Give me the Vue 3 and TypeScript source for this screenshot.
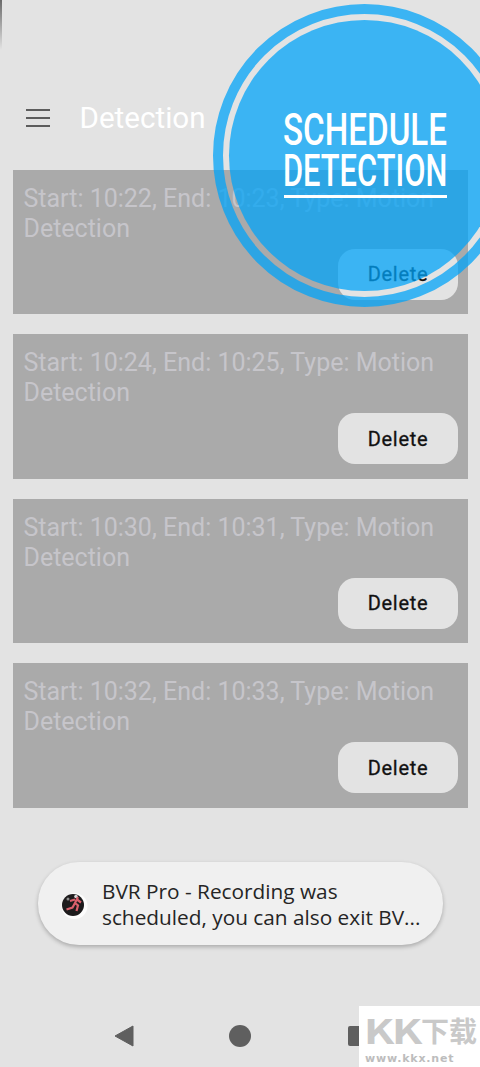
<script setup lang="ts">
interface Slot {
  start: string
  end: string
}

const slots: Slot[] = [
  { start: '10:22', end: '10:23' },
  { start: '10:24', end: '10:25' },
  { start: '10:30', end: '10:31' },
  { start: '10:32', end: '10:33' },
]
</script>

<template>
  <div class="screen">
    <header class="topbar">
      <div class="burger"><span></span><span></span><span></span></div>
      <h1 class="title">Detection</h1>
    </header>

    <div class="list">
      <div v-for="slot in slots" :key="slot.start" class="card">
        <p class="card-text">Start: {{ slot.start }}, End: {{ slot.end }}, Type: Motion Detection</p>
        <button class="btn-delete">Delete</button>
      </div>
    </div>

    <div class="toast">
      <svg class="toast-icon" width="30" height="30" viewBox="0 0 30 30">
        <circle cx="14.5" cy="17" r="13" fill="#fdfdfd" />
        <circle cx="13" cy="16" r="11" fill="#1d1b1c" />
        <circle cx="8" cy="10" r="1.5" fill="#8c8c8c" />
        <circle cx="16" cy="7.5" r="1.8" fill="#d9d9d9" />
        <path d="M18 8l-3 6 3 2.5-1.5 5.5M15 14l-2.5 4.5-6 2M15 10.5l-5 1.5M17 10.5l4 3" fill="none" stroke="#d9606c" stroke-width="2.2" />
      </svg>
      <p class="toast-text">BVR Pro - Recording was<br />scheduled, you can also exit BV...</p>
    </div>

    <nav class="navbar">
      <svg width="20" height="22" viewBox="0 0 20 22"><path d="M19 1v20L1 11z" fill="#5f5f5f" stroke="#5f5f5f" stroke-linejoin="round" /></svg>
      <span class="nav-home"></span>
      <span class="nav-recent"></span>
    </nav>

    <!-- * Tutorial callout over the list -->
    <div class="callout">
      <div class="callout-ring"></div>
      <div class="callout-fill"></div>
      <div class="callout-label">
        <span class="line-schedule">SCHEDULE</span>
        <span class="line-detection">DETECTION</span>
      </div>
    </div>

    <div class="edge"></div>

    <div class="watermark">
      <div class="wm-logo">
        <span class="wm-k">K</span>
        <span class="wm-k">K</span>
        <span>下</span>
        <span>载</span>
      </div>
      <div class="wm-url">www.kkx.net</div>
    </div>
  </div>
</template>

<style>
html,
body {
  margin: 0;
  background: #e3e3e3;
}
</style>

<style scoped>
.screen {
  position: relative;
  width: 480px;
  height: 1067px;
  overflow: hidden;
  background: #e3e3e3;
  font-family: Roboto, sans-serif;
}

.topbar {
  display: flex;
  align-items: center;
  height: 169.5px;
  padding: 67px 0 0 26px;
  box-sizing: border-box;
}

.burger {
  display: flex;
  flex-direction: column;
  gap: 6px;
  width: 24px;
  margin-right: 29.5px;
}

.burger span {
  height: 2px;
  background: #5d5d5d;
}

.title {
  margin: 0;
  font-size: 29.6px;
  font-weight: 400;
  color: #fff;
}

.list {
  display: flex;
  flex-direction: column;
  gap: 20px;
  padding-left: 13px;
}

.card {
  display: flex;
  flex-direction: column;
  width: 455px;
  height: 144.5px;
  padding: 14px 10px 0 10.5px;
  box-sizing: border-box;
  background: #aaaaaa;
}

.card-text {
  margin: 0;
  font-size: 25px;
  line-height: 30px;
  color: #c6c5ca;
}

.btn-delete {
  align-self: flex-end;
  width: 120px;
  height: 51px;
  margin-top: 5px;
  padding-top: 1px;
  border: none;
  border-radius: 17px;
  background: #e3e3e3;
  font-family: Roboto, sans-serif;
  font-size: 20px;
  font-weight: 400;
  letter-spacing: 0.7px;
  color: #111;
  -webkit-text-stroke: 0.3px #111;
}

.toast {
  display: flex;
  align-items: center;
  gap: 12px;
  width: 405px;
  height: 83px;
  margin: 54.5px 0 0 38px;
  padding-left: 22px;
  box-sizing: border-box;
  border-radius: 41px;
  background: #f0f0f0;
  box-shadow: 0 2px 4px rgba(0, 0, 0, 0.25);
}

.toast-text {
  margin: 0;
  font-family: 'Open Sans', sans-serif;
  font-size: 20.8px;
  line-height: 26px;
  color: #252525;
  white-space: nowrap;
}

.navbar {
  position: relative;
  display: flex;
  align-items: center;
  height: 22px;
  margin-top: 80px;
  padding-left: 114px;
}

.nav-home {
  width: 22px;
  height: 22px;
  margin-left: 95px;
  border-radius: 50%;
  background: #5f5f5f;
}

.nav-recent {
  width: 20px;
  height: 20px;
  margin-left: 97px;
  border-radius: 2px;
  background: #5f5f5f;
}

.callout {
  position: absolute;
  left: 213px;
  top: 4px;
  width: 303px;
  height: 303px;
}

.callout-ring {
  position: absolute;
  inset: 0;
  box-sizing: border-box;
  border: 10px solid rgba(0, 163, 248, 0.74);
  border-radius: 50%;
}

.callout-fill {
  position: absolute;
  inset: 16px;
  border-radius: 50%;
  background: rgba(0, 163, 248, 0.74);
}

.callout-label {
  position: absolute;
  left: 71px;
  top: 105px;
  width: 163px;
  padding-bottom: 4px;
  border-bottom: 3px solid #fff;
  color: #fff;
}

.callout-label span {
  display: block;
  width: 225px;
  margin-left: -1px;
  font-size: 45px;
  line-height: 41px;
  font-weight: 500;
  transform-origin: left center;
  white-space: nowrap;
}

.line-schedule {
  transform: scaleX(0.737);
}

.line-detection {
  transform: scaleX(0.685);
}

.edge {
  position: absolute;
  left: 0;
  top: 0;
  width: 2px;
  height: 50px;
  background: linear-gradient(#6a6a6a, #e3e3e3);
}

.watermark {
  position: absolute;
  right: 0;
  bottom: 0;
  width: 121px;
  height: 61px;
  background: #fff;
  overflow: hidden;
}

.wm-logo {
  display: flex;
  padding: 5px 0 0 6px;
  font-family: 'Noto Sans CJK SC', sans-serif;
  font-size: 28px;
  line-height: 38px;
  font-weight: 700;
  color: #c9c9c9;
}

.wm-logo span {
  width: 28px;
  text-align: center;
}

.wm-k {
  font-size: 33px;
  transform: scaleX(1.35);
}

.wm-url {
  margin-top: 3px;
  padding-left: 6px;
  font-family: 'DejaVu Sans', sans-serif;
  font-size: 11px;
  line-height: 14px;
  font-weight: 700;
  letter-spacing: 0.8px;
  color: #bdbdbd;
  white-space: nowrap;
}
</style>
